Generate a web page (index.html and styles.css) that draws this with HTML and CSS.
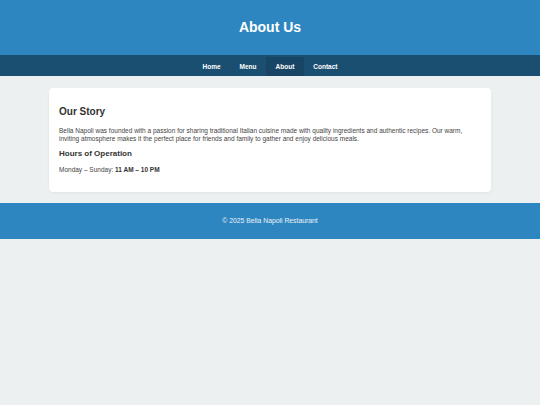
FILE: index.html
```html
<!DOCTYPE html>
<html lang="en">

<head>
    <meta charset="UTF-8">
    <meta name="viewport" content="width=device-width, initial-scale=1.0">
    <title>About Us - Bella Napoli</title>
    <link rel="stylesheet" href="styles.css">
</head>

<body>
    <header>
        <h1>About Us</h1>
    </header>

    <nav>
        <a href="#">Home</a>
        <a href="#">Menu</a>
        <a href="#" class="active">About</a>
        <a href="#">Contact</a>
    </nav>

    <main class="container">
        <section class="card">
            <h2>Our Story</h2>
            <p>Bella Napoli was founded with a passion for sharing traditional Italian cuisine made with quality ingredients and authentic recipes. Our warm, inviting atmosphere makes it the perfect place for friends and family to gather and enjoy delicious meals.</p>
            <h3>Hours of Operation</h3>
            <p class="hours">Monday &ndash; Sunday: <strong>11 AM &ndash; 10 PM</strong></p>
        </section>
    </main>

    <footer>
        <p>&copy; 2025 Bella Napoli Restaurant</p>
    </footer>
</body>

</html>
```

FILE: styles.css
```css
body {
    font-family: "Liberation Sans", Arial, sans-serif;
    margin: 0;
    padding: 0;
    background-color: #ecf0f1;
    color: #333;
}

header {
    background-color: #2e86c1;
    color: white;
    text-align: center;
    padding: 19px 0;
}

h1 {
    margin: 0;
    font-size: 14px;
    line-height: 17px;
}

nav {
    background-color: #1b4f72;
    display: flex;
    justify-content: center;
    padding-top: 2px;
}

nav a {
    color: white;
    text-decoration: none;
    font-weight: bold;
    font-size: 6.5px;
    line-height: 19px;
    padding: 0 9.5px;
}

nav a.active {
    background-color: #174563;
}

.container {
    max-width: 442px;
    margin: 12px auto 11px;
}

.card {
    background-color: white;
    border-radius: 4px;
    padding: 10px;
    box-shadow: 0 1px 3px rgba(0, 0, 0, 0.06);
}

h2 {
    margin: 8px 0 9px;
    font-size: 10px;
    line-height: 12px;
}

p {
    margin: 0;
    font-size: 6.5px;
    line-height: 8px;
    color: #444;
}

h3 {
    margin: 6px 0 7px;
    font-size: 8px;
    line-height: 10px;
}

.hours {
    margin-bottom: 8px;
}

.hours strong {
    color: #333;
}

footer {
    background-color: #2e86c1;
    text-align: center;
    padding: 14px 0;
}

footer p {
    color: #eaf2f8;
    font-size: 6.8px;
}
```
